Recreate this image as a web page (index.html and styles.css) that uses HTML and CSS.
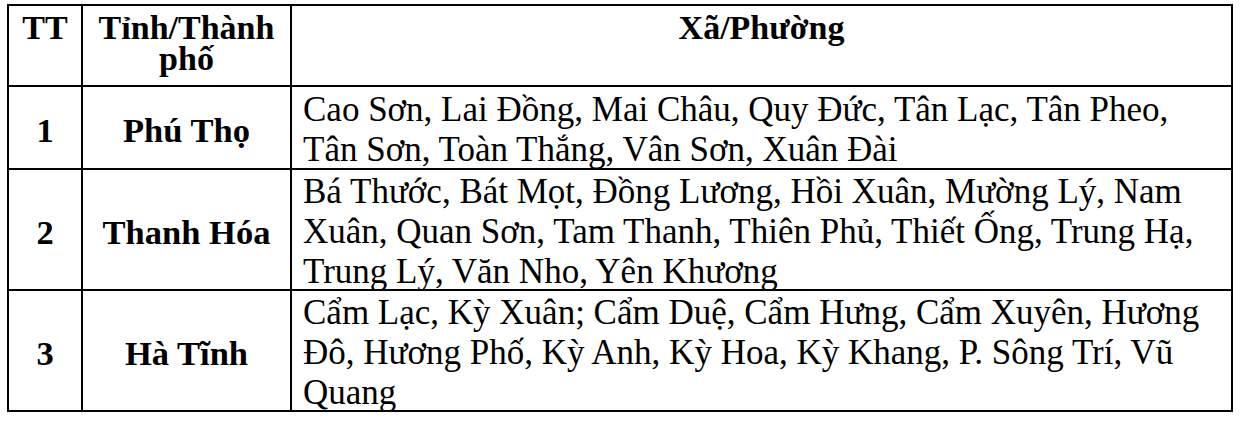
FILE: index.html
```html
<!DOCTYPE html>
<html lang="vi">
<head>
<meta charset="utf-8">
<title>Danh sách xã/phường</title>
<link rel="stylesheet" href="styles.css">
</head>
<body>
<div class="grid" role="table">
  <div class="cell head c1">TT</div>
  <div class="cell head c2">Tỉnh/Thành<br>phố</div>
  <div class="cell head c3">Xã/Phường</div>

  <div class="cell num r-short">1</div>
  <div class="cell prov r-short">Phú Thọ</div>
  <div class="cell list r-short">Cao Sơn, Lai Đồng, Mai Châu, Quy Đức, Tân Lạc, Tân Pheo,<br>Tân Sơn, Toàn Thắng, Vân Sơn, Xuân Đài</div>

  <div class="cell num">2</div>
  <div class="cell prov">Thanh Hóa</div>
  <div class="cell list">Bá Thước, Bát Mọt, Đồng Lương, Hồi Xuân, Mường Lý, Nam<br>Xuân, Quan Sơn, Tam Thanh, Thiên Phủ, Thiết Ống, Trung Hạ,<br>Trung Lý, Văn Nho, Yên Khương</div>

  <div class="cell num">3</div>
  <div class="cell prov">Hà Tĩnh</div>
  <div class="cell list">Cẩm Lạc, Kỳ Xuân; Cẩm Duệ, Cẩm Hưng, Cẩm Xuyên, Hương<br>Đô, Hương Phố, Kỳ Anh, Kỳ Hoa, Kỳ Khang, P. Sông Trí, Vũ<br>Quang</div>
</div>
</body>
</html>
```

FILE: styles.css
```css
* { box-sizing: border-box; }

html, body {
  margin: 0;
  padding: 0;
  background: #ffffff;
}

body {
  padding: 4px 0 0 7px;
  font-family: "Liberation Serif", "Times New Roman", serif;
  color: #000000;
  font-size: 34px;
}

.grid {
  display: grid;
  grid-template-columns: 74px 209px 941px;
  grid-template-rows: 81px 83px 121px 121px;
  width: 1226px;
  border-left: 2px solid #000;
  border-top: 2px solid #000;
}

.cell {
  border-right: 2px solid #000;
  border-bottom: 2px solid #000;
  white-space: nowrap;
}

.head {
  font-weight: bold;
  text-align: center;
  line-height: 31px;
  padding-top: 6px;
}

.num, .prov {
  font-weight: bold;
  font-size: 34.5px;
  display: flex;
  align-items: center;
  justify-content: center;
  text-align: center;
  padding-top: 5px;
}

.list {
  display: flex;
  align-items: center;
  font-size: 35px;
  line-height: 40px;
  padding: 4px 6px 0 11px;
}
```
